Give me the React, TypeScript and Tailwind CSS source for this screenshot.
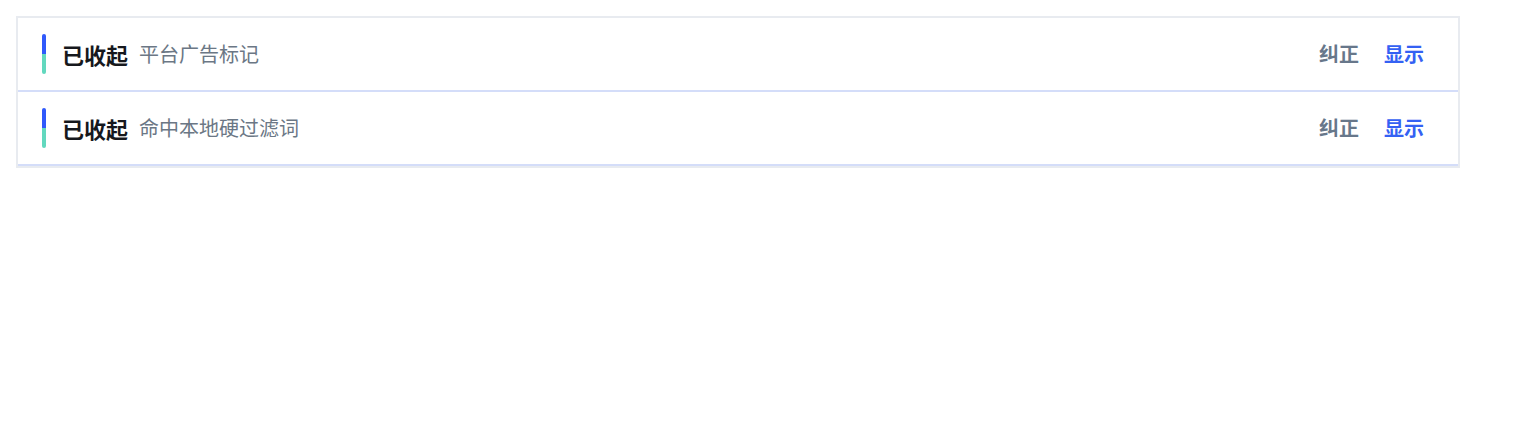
import React from "react";

const rows = [
  { id: 1, reason: "平台广告标记" },
  { id: 2, reason: "命中本地硬过滤词" },
];

function StatusBar() {
  return (
    <div className="flex flex-col w-[4px] h-[40px] rounded-full overflow-hidden shrink-0">
      <div className="flex-1 bg-[#3059fb]" />
      <div className="flex-1 bg-[#62d8be]" />
    </div>
  );
}

export default function App() {
  return (
    <div
      className="min-h-[440px] bg-white pt-[16px] pl-[16px]"
      style={{ fontFamily: '"Noto Sans CJK SC", "Noto Sans", sans-serif' }}
    >
      <div className="w-[1444px] border-2 border-[#e8ebf0] bg-white">
        {rows.map((row) => (
          <div
            key={row.id}
            className="flex items-center h-[74px] border-b-2 border-[#d4ddf9] pl-[24px] pr-[34px]"
          >
            <StatusBar />
            <span className="ml-[16px] text-[22px] font-bold text-[#16181d] leading-none">
              已收起
            </span>
            <span className="ml-[11px] text-[20px] text-[#6b7785] leading-none">
              {row.reason}
            </span>
            <div className="ml-auto flex items-center gap-[25px]">
              <button className="text-[20px] font-semibold text-[#67778a] leading-none">
                纠正
              </button>
              <button className="text-[20px] font-semibold text-[#3461f3] leading-none">
                显示
              </button>
            </div>
          </div>
        ))}
      </div>
    </div>
  );
}
